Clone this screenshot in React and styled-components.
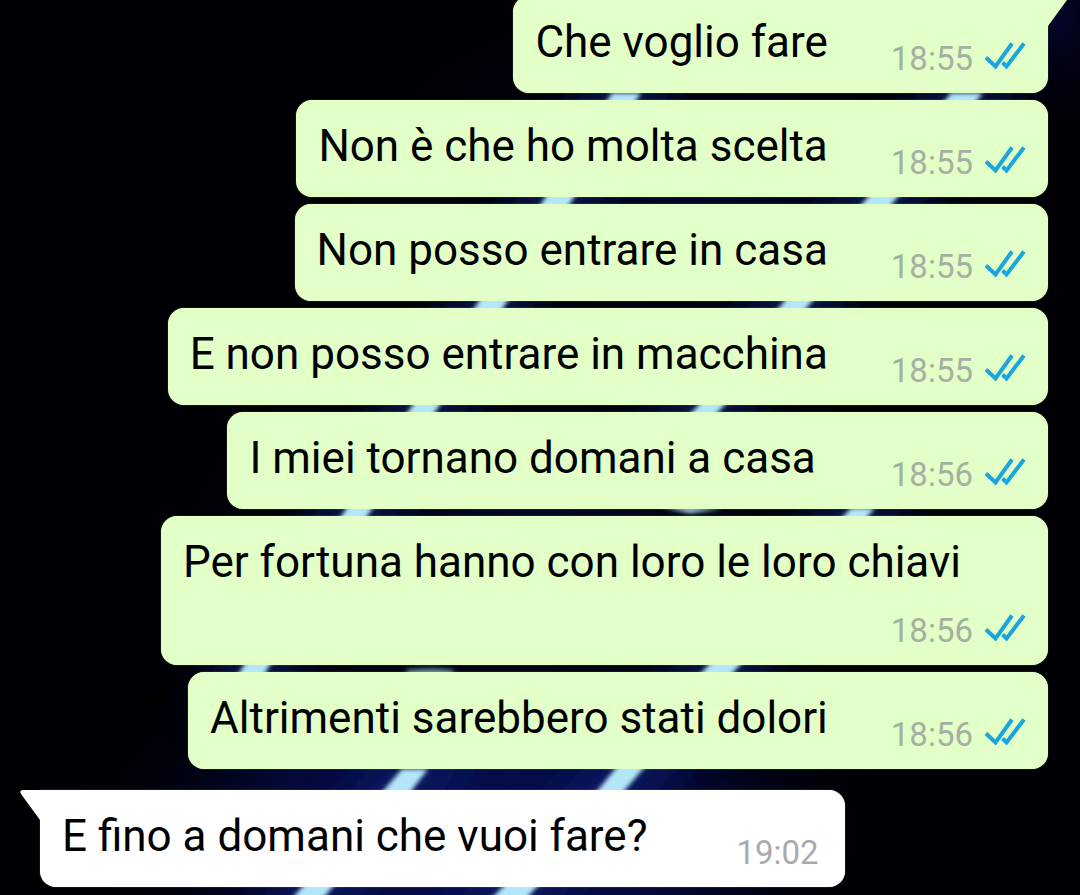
import React from "react";
import styled, { createGlobalStyle, css } from "styled-components";

const GlobalStyle = createGlobalStyle`
  * {
    box-sizing: border-box;
  }
  body {
    margin: 0;
    background: #000004;
    font-family: Roboto, "Noto Sans", sans-serif;
  }
`;

const Chat = styled.main`
  position: relative;
  height: 100vh;
  overflow: hidden;
`;

const WallpaperSvg = styled.svg`
  position: absolute;
  inset: 0;
  width: 100%;
  height: 100%;
`;

// newest message stays at the bottom, older ones run off the top
const Feed = styled.ol`
  position: relative;
  display: flex;
  flex-direction: column;
  justify-content: flex-end;
  gap: 7px;
  height: 100%;
  margin: 0;
  padding: 0 32px 8px 40px;
  list-style: none;
`;

const Bubble = styled.li`
  position: relative;
  flex: none;
  display: flex;
  align-items: flex-end;
  justify-content: space-between;
  gap: ${(props) => (props.$roomy ? "75px" : "63px")};
  align-self: flex-end;
  padding: 20px 22px 15px;
  border-radius: 16px;
  background: #e1ffc7;
  color: #000;
  box-shadow: 0 0 1px rgba(225, 255, 199, 0.8);

  ${(props) =>
    props.$incoming &&
    css`
      align-self: flex-start;
      gap: 89px;
      margin-top: 14px;
      padding-right: 26px;
      background: #fff;
      box-shadow: 0 0 1px rgba(255, 255, 255, 0.8);
    `}

  ${(props) =>
    props.$tail &&
    (props.$incoming
      ? css`
          border-top-left-radius: 0;
        `
      : css`
          border-top-right-radius: 0;
        `)}

  ${(props) =>
    props.$wrapped &&
    css`
      flex-direction: column;
      align-items: stretch;
      gap: 13px;
      width: 88%;
    `}
`;

const Tail = styled.svg`
  position: absolute;
  top: 0;
  width: 21px;
  height: 31px;
  fill: ${(props) => (props.$incoming ? "#fff" : "#e1ffc7")};
  ${(props) =>
    props.$incoming
      ? css`
          right: calc(100% - 1px);
        `
      : css`
          left: calc(100% - 1px);
          transform: scaleX(-1);
        `}
`;

const Text = styled.p`
  margin: 0;
  padding-bottom: 10px;
  font-size: 44px;
  line-height: 52px;
  white-space: nowrap;
`;

const Meta = styled.div`
  display: flex;
  align-items: center;
  justify-content: flex-end;
  gap: 11px;
`;

const Time = styled.time`
  color: ${(props) => (props.$incoming ? "#a8abad" : "#a5b0a2")};
  font-size: 33px;
  line-height: 39px;
`;

const Ticks = styled.svg`
  flex: none;
  width: 42px;
  height: 39px;
  fill: none;
  stroke: #1ba5de;
  stroke-width: 4;
`;

const messages = [
  { id: 1, text: "Che voglio fare", time: "18:55", tail: true },
  { id: 2, text: "Non è che ho molta scelta", time: "18:55" },
  { id: 3, text: "Non posso entrare in casa", time: "18:55" },
  { id: 4, text: "E non posso entrare in macchina", time: "18:55" },
  { id: 5, text: "I miei tornano domani a casa", time: "18:56", roomy: true },
  {
    id: 6,
    text: "Per fortuna hanno con loro le loro chiavi",
    time: "18:56",
    wrapped: true,
  },
  { id: 7, text: "Altrimenti sarebbero stati dolori", time: "18:56" },
  {
    id: 8,
    text: "E fino a domani che vuoi fare?",
    time: "19:02",
    tail: true,
    incoming: true,
  },
];

const beams = [
  "M612 93H641L503 308L370 512L268 668L256 690H230L242 668L344 512L477 304Z",
  "M951 93H983L810 304L722 408L700 430H674L696 408L782 304Z",
  "M851 508H875L740 665L643 769L625 790L525 900H490L598 790L615 769L703 671Z",
  "M402 769H428L412 790L322 900H291L384 790Z",
];

function Wallpaper() {
  return (
    <WallpaperSvg
      viewBox="0 0 1080 895"
      preserveAspectRatio="xMidYMid slice"
      aria-hidden="true"
    >
      <defs>
        <radialGradient id="glow">
          <stop offset="0" stopColor="#07125a" />
          <stop offset="0.5" stopColor="#050a3a" />
          <stop offset="1" stopColor="#000004" stopOpacity="0" />
        </radialGradient>
        <radialGradient id="haze">
          <stop offset="0" stopColor="#05062a" />
          <stop offset="1" stopColor="#000004" stopOpacity="0" />
        </radialGradient>
        <filter id="soft" x="-10%" y="-10%" width="120%" height="120%">
          <feGaussianBlur stdDeviation="2" />
        </filter>
        <filter id="halo" x="-20%" y="-20%" width="140%" height="140%">
          <feGaussianBlur stdDeviation="18" />
        </filter>
      </defs>
      <rect width="1080" height="895" fill="#000004" />
      <ellipse cx="1060" cy="20" rx="90" ry="130" fill="url(#haze)" />
      <ellipse cx="690" cy="200" rx="420" ry="260" fill="url(#haze)" />
      <ellipse cx="540" cy="530" rx="440" ry="260" fill="url(#haze)" />
      <ellipse cx="480" cy="830" rx="420" ry="220" fill="url(#glow)" />
      <g
        filter="url(#halo)"
        fill="#0a1c6e"
        stroke="#0a1c6e"
        strokeWidth="50"
        opacity="0.6"
      >
        {beams.map((d) => (
          <path key={d} d={d} />
        ))}
      </g>
      <g filter="url(#soft)" fill="#b2e6f8">
        {beams.map((d) => (
          <path key={d} d={d} />
        ))}
        <path d="M662 507L722 509L690 513Z" />
        <path d="M405 670Q430 667 455 670L450 675H410Z" opacity="0.6" />
      </g>
    </WallpaperSvg>
  );
}

function Message({ message }) {
  const { text, time, tail, incoming, wrapped, roomy } = message;

  return (
    <Bubble
      $incoming={incoming}
      $tail={tail}
      $wrapped={wrapped}
      $roomy={roomy}
    >
      {tail && (
        <Tail $incoming={incoming} viewBox="0 0 21 31" aria-hidden="true">
          <path d="M21 0H3Q-1 0 1 4L20 30L21 31Z" />
        </Tail>
      )}
      <Text>{text}</Text>
      <Meta>
        <Time $incoming={incoming}>{time}</Time>
        {!incoming && (
          <Ticks viewBox="0 0 42 39" role="img" aria-label="Letto">
            <path d="M2 18.5L11.5 27.5L28 4.5" />
            <path d="M18.5 23.5L22.5 27.5L40 4.5" />
          </Ticks>
        )}
      </Meta>
    </Bubble>
  );
}

function App() {
  return (
    <>
      <GlobalStyle />
      <Chat>
        <Wallpaper />
        <Feed>
          {messages.map((message) => (
            <Message key={message.id} message={message} />
          ))}
        </Feed>
      </Chat>
    </>
  );
}

export default App;
